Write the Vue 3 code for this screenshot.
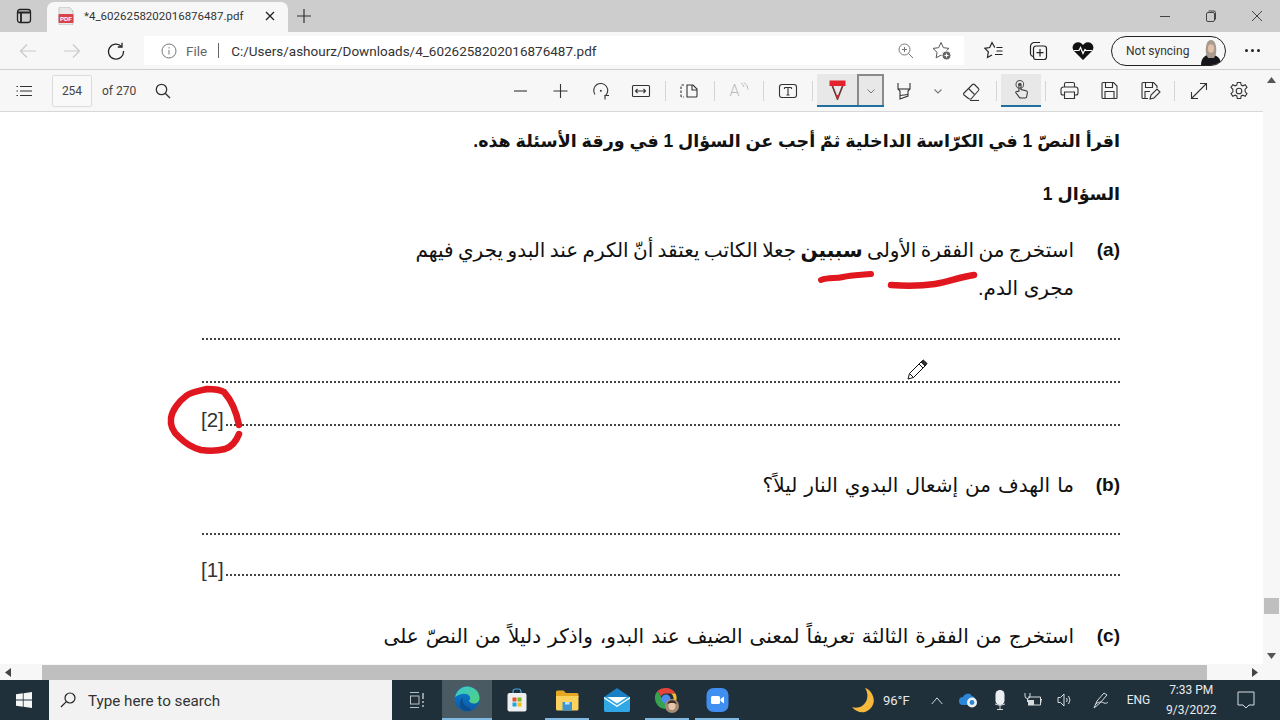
<script setup>
const leftTools = [
  { k: 'minus', d: ['M4 10h13'] },
  { k: 'plus', d: ['M10.5 3v14M3.5 10h14'] },
  { k: 'rotate', d: ['M5 13.5A7 7 0 1 1 15 15', 'M15 18.5V14.5h4', 'M10.5 9.5h.6v.6h-.6z'] },
  { k: 'fit', d: ['M3.5 4.5h15a1 1 0 0 1 1 1v9a1 1 0 0 1-1 1h-15a1 1 0 0 1-1-1v-9a1 1 0 0 1 1-1z', 'M6 10h9M7.5 8l-2 2 2 2M13.5 8l2 2-2 2'] },
]
const afterDraw = [
  { k: 'high', w: 40, d: ['M5 2v6l2 2v8l8-3v-5l2-2V2', 'M5 8h12', 'M7 14.5l8-1'] },
  { k: 'chev', w: 28, small: true, d: ['M7.500 8.500L11 12l3.500-3.500'] },
  { k: 'erase', w: 40, d: ['M3 12l8.500-8.500a1.500 1.500 0 0 1 2 0l4 4a1.500 1.500 0 0 1 0 2L10 18H8.500a1.500 1.500 0 0 1-1-.5L3 14a1.400 1.400 0 0 1 0-2z', 'M7.500 7.500l6 6', 'M9 19.500h9'] },
]
const rightTools = [
  { k: 'print', d: ['M5.500 7V4a1.500 1.500 0 0 1 1.500-1.500h7A1.500 1.500 0 0 1 15.500 4v3', 'M5.500 15H4a2 2 0 0 1-2-2V9.500a2.500 2.500 0 0 1 2.500-2.500h12A2.500 2.500 0 0 1 19 9.500V13a2 2 0 0 1-2 2h-1.500', 'M5.500 12h10v6.500h-10z'] },
  { k: 'save', d: ['M4 2.500h10.500L18 6v11.500a1 1 0 0 1-1 1H4a1 1 0 0 1-1-1v-14a1 1 0 0 1 1-1z', 'M6.500 2.500v5h7v-5', 'M6 18.500v-7h9v7'] },
  { k: 'saveas', d: ['M9 18.500H4a1 1 0 0 1-1-1v-14a1 1 0 0 1 1-1h10.500L18 6v2', 'M6.500 2.500v5h7v-5', 'M6 18v-6.500h5', 'M11 19l1-4 6-6 3 3-6 6z'] },
]
</script>

<template>
  <div class="screen">
    <div class="browser">
      <!-- tab strip -->
      <header class="tabstrip">
        <svg class="tabs-icon" width="16" height="16" viewBox="0 0 16 16" fill="none" stroke="#222" stroke-width="1.300">
          <rect x="1.500" y="1.500" width="13" height="13" rx="2.500" />
          <path d="M1.500 4.500h13M5 4.500v10" stroke-width="1.800" />
        </svg>
        <div class="tab">
          <svg width="16" height="18" viewBox="0 0 16 18">
            <path d="M1 1.500A1.500 1.500 0 0 1 2.500 0H11l4 4v12.500a1.500 1.500 0 0 1-1.500 1.500h-11A1.500 1.500 0 0 1 1 16.500z" fill="#e8e8e8" stroke="#999" stroke-width=".5" />
            <rect x="0.500" y="7" width="15" height="9" rx="1" fill="#d9444a" />
            <text x="8" y="14" text-anchor="middle" font-size="6" font-weight="700" fill="#fff" font-family="Liberation Sans">PDF</text>
          </svg>
          <span class="tab-title">*4_6026258202016876487.pdf</span>
          <svg class="tab-close" width="12" height="12" viewBox="0 0 12 12" stroke="#222" stroke-width="1.300"><path d="M2 2l8 8M10 2l-8 8" /></svg>
        </div>
        <svg class="newtab" width="16" height="16" viewBox="0 0 16 16" stroke="#333" stroke-width="1.200"><path d="M8 1v14M1 8h14" /></svg>
        <div class="winctl">
          <svg width="12" height="12" viewBox="0 0 12 12" stroke="#444"><path d="M1 6.500h10" /></svg>
          <svg width="12" height="12" viewBox="0 0 12 12" fill="none" stroke="#444"><rect x="1.500" y="2.500" width="8" height="9" rx="1.500" /><path d="M3.500 1h5.500a1.500 1.500 0 0 1 1.500 1.500v7" /></svg>
          <svg width="12" height="12" viewBox="0 0 12 12" stroke="#444"><path d="M1 1l10 10M11 1L1 11" /></svg>
        </div>
      </header>

      <!-- address row -->
      <nav class="addr-row">
        <div class="nav-btns">
          <svg width="18" height="18" viewBox="0 0 18 18" fill="none" stroke="#c9c9c9" stroke-width="1.200"><path d="M17 9H1.500M8 2.500L1.500 9 8 15.500" /></svg>
          <svg width="18" height="18" viewBox="0 0 18 18" fill="none" stroke="#c9c9c9" stroke-width="1.200"><path d="M1 9h15.500M10 2.500L16.500 9 10 15.500" /></svg>
          <svg width="18" height="18" viewBox="0 0 18 18" fill="none" stroke="#222" stroke-width="1.300"><path d="M14.500 4.500A7.500 7.500 0 1 0 16.500 9" /><path d="M15 .8v4.200h-4.200" /></svg>
        </div>
        <div class="omnibox">
          <svg width="16" height="16" viewBox="0 0 16 16" fill="none" stroke="#777"><circle cx="8" cy="8" r="7" /><path d="M8 7v4.500M8 4.200v1.300" /></svg>
          <span class="file">File</span>
          <span class="pipe"></span>
          <span class="url">C:/Users/ashourz/Downloads/4_6026258202016876487.pdf</span>
          <svg class="zoomi" width="16" height="16" viewBox="0 0 16 16" fill="none" stroke="#777"><circle cx="6.500" cy="6.500" r="5.500" /><path d="M10.500 10.500L15 15M6.500 4v5M4 6.500h5" /></svg>
          <svg class="stari" width="20" height="20" viewBox="0 0 20 20" fill="none" stroke="#555"><path d="M9 1.500l2.400 5.200 5.600.7-4.100 3.900 1 5.600-4.900-2.800-4.900 2.800 1-5.600L1 7.400l5.600-.7z" /><circle cx="14.500" cy="14.500" r="4.500" fill="#666" stroke="#fff" /><path d="M14.500 12.500v4M12.500 14.500h4" stroke="#fff" /></svg>
        </div>
        <div class="addr-tools">
          <svg width="20" height="20" viewBox="0 0 20 20" fill="none" stroke="#222" stroke-width="1.200"><path d="M10.800 6.500L8 1.500 5.700 6.500l-4.900.8 3.500 3.500-.8 5.700L8 14" /><path d="M12.500 6.500h6M12.500 10h6M11 13.500h7.500" /></svg>
          <svg width="20" height="20" viewBox="0 0 20 20" fill="none" stroke="#222" stroke-width="1.200"><path d="M5 15.500A3 3 0 0 1 2.500 13V5.500A4 4 0 0 1 6.500 1.500H12" /><rect x="5.500" y="5" width="13" height="13.500" rx="2.500" /><path d="M12 8v7.500M8.500 11.700h7" /></svg>
          <svg width="22" height="20" viewBox="0 0 22 20"><path d="M11 19L2 10A5.500 5.500 0 0 1 2 3a5.500 5.500 0 0 1 7.500-.5L11 4l1.500-1.500A5.500 5.500 0 0 1 20 3a5.500 5.500 0 0 1 0 7z" fill="#111" /><path d="M2 9.500h5l1.500-3 2.500 6 2-4 1 1h6" fill="none" stroke="#fff" stroke-width="1.200" /></svg>
          <div class="sync">
            <span>Not syncing</span>
            <svg width="22" height="26" viewBox="0 0 22 26">
              <path d="M1 26c0-6 3-9 7-10.500h5c5 1.500 8 4.500 8 10.500z" fill="#15151a" />
              <path d="M6 15C5 7 7 1 11 1s6 6 5 14l-2 4H8z" fill="#a89a8e" />
              <ellipse cx="11" cy="9.500" rx="3" ry="4.200" fill="#e3c1a8" />
            </svg>
          </div>
          <span class="more"><i></i><i></i><i></i></span>
        </div>
      </nav>

      <div class="body-row">
        <div class="main-col">
          <!-- pdf toolbar -->
          <div class="pdfbar">
            <svg class="listi" width="16" height="12" viewBox="0 0 16 12" stroke="#333" stroke-width="1.200"><path d="M4 1.500h12M4 6h12M4 10.500h12M.5 1.500h1.500M.5 6h1.500M.5 10.500h1.500" /></svg>
            <div class="pagebox">254</div>
            <span class="ofpages">of 270</span>
            <svg class="findi" width="16" height="16" viewBox="0 0 16 16" fill="none" stroke="#333" stroke-width="1.300"><circle cx="6.500" cy="6.500" r="5.200" /><path d="M10.200 10.200L15 15" /></svg>

            <div class="tools">
              <div v-for="t in leftTools" :key="t.k" class="cell">
                <svg width="22" height="20" viewBox="0 0 22 20" fill="none" stroke="#333" stroke-width="1.100"><path v-for="p in t.d" :key="p" :d="p" /></svg>
              </div>
              <span class="sep"></span>
              <div class="cell">
                <svg class="pageview" width="20" height="18" viewBox="0 0 20 18" fill="none" stroke="#333" stroke-width="1.100"><path d="M5 3H3a1 1 0 0 0-1 1v10a1 1 0 0 0 1 1h2" stroke-dasharray="2.500 1.500" /><path d="M8 3h6l4 4v7a1 1 0 0 1-1 1H8z" /><path d="M13 3v5h5" /></svg>
              </div>
              <span class="sep"></span>
              <div class="cell readaloud">
                <span>A</span>
                <svg width="9" height="10" viewBox="0 0 9 10" fill="none" stroke="#bbb"><path d="M1 1q3 2 3 4M4 .5q4 3 4 7" /></svg>
              </div>
              <span class="sep"></span>
              <div class="cell">
                <svg width="20" height="18" viewBox="0 0 20 18" fill="none" stroke="#333" stroke-width="1.100"><rect x="1.500" y="2.500" width="17" height="13" rx="2.500" /><path d="M6.500 5.500h7M10 5.500v7.500M8.500 13h3M6.500 5.500v1.500M13.500 5.500v1.500" /></svg>
              </div>
              <span class="sep"></span>
              <div class="drawgroup">
                <div class="drawbtn">
                  <svg width="17" height="20" viewBox="0 0 17 20"><path d="M3 5l5.500 14L14 5" fill="none" stroke="#6f3436" stroke-width="1.700" /><rect x="0.500" y="0.500" width="16" height="5.500" fill="#e3222b" /><path d="M6.800 15l1.700 4.500 1.700-4.500z" fill="#d9262e" /></svg>
                </div>
                <div class="drawchev">
                  <svg width="12" height="12" viewBox="0 0 12 12" fill="none" stroke="#777"><path d="M2.500 4.500L6 8l3.500-3.500" /></svg>
                </div>
              </div>
              <div v-for="t in afterDraw" :key="t.k" class="cell" :style="{ width: t.w + 'px' }">
                <svg width="22" height="20" viewBox="0 0 22 20" fill="none" :stroke="t.small ? '#777' : '#333'" stroke-width="1.100"><path v-for="p in t.d" :key="p" :d="p" /></svg>
              </div>
              <span class="sep"></span>
              <div class="touchbtn">
                <svg width="17" height="21" viewBox="0 0 20 24" fill="none" stroke="#333" stroke-width="1.200"><circle cx="8" cy="6" r="4.500" stroke="#555" /><circle cx="8" cy="6" r="2" fill="#666" stroke="none" /><path d="M7 14V6.500a1.200 1.200 0 0 1 2.400 0V12l6 1.500a2 2 0 0 1 1.500 2.200l-.7 4.300a2 2 0 0 1-2 2H9a2 2 0 0 1-1.500-.8L3.500 16a1.300 1.300 0 0 1 1.800-1.800z" /></svg>
              </div>
              <span class="sep"></span>
              <div v-for="t in rightTools" :key="t.k" class="cell">
                <svg width="22" height="21" viewBox="0 0 22 21" fill="none" stroke="#333" stroke-width="1.100"><path v-for="p in t.d" :key="p" :d="p" /></svg>
              </div>
              <span class="sep"></span>
              <div class="cell">
                <svg width="18" height="18" viewBox="0 0 18 18" fill="none" stroke="#333" stroke-width="1.100"><path d="M1.500 16.500L16.500 1.500M10 1.500h6.500V8M1.500 10v6.500H8" /></svg>
              </div>
              <div class="cell">
                <svg width="20" height="20" viewBox="0 0 20 20" fill="none" stroke="#333" stroke-width="1.100"><circle cx="10" cy="10" r="2.800" /><path d="M8.300 1.500h3.400l.5 2.500 1.700.8 2.300-1.100 1.800 2.800-1.900 1.700v2.600l1.900 1.700-1.800 2.800-2.300-1.100-1.700.8-.5 2.500H8.300l-.5-2.500-1.700-.8-2.300 1.100-1.800-2.800 1.900-1.700V8.300L2 6.500l1.800-2.800 2.300 1.100 1.700-.8z" /></svg>
              </div>
            </div>
          </div>

          <!-- page -->
          <main class="doc">
            <p class="line bold first" dir="rtl">اقرأ النصّ 1 في الكرّاسة الداخلية ثمّ أجب عن السؤال 1 في ورقة الأسئلة هذه.</p>
            <p class="line bold second" dir="rtl">السؤال 1</p>

            <section class="q qa">
              <div class="q-text" dir="rtl">
                <div class="tight">استخرج من الفقرة الأولى <b>سببين</b> جعلا الكاتب يعتقد أنّ الكرم عند البدو يجري فيهم</div>
                <div>مجرى الدم.</div>
              </div>
              <span class="q-tag">(a)</span>
            </section>
            <div class="dots d1"><i></i></div>
            <div class="dots d2"><i></i></div>
            <div class="dots d2"><span class="mark">[2]</span><i></i></div>

            <section class="q qb">
              <div class="q-text wide" dir="rtl"><div>ما الهدف من إشعال البدوي النار ليلاً؟</div></div>
              <span class="q-tag">(b)</span>
            </section>
            <div class="dots d3"><i></i></div>
            <div class="dots d4"><span class="mark">[1]</span><i></i></div>

            <section class="q qc">
              <div class="q-text wide" dir="rtl"><div>استخرج من الفقرة الثالثة تعريفاً لمعنى الضيف عند البدو، واذكر دليلاً من النصّ على</div></div>
              <span class="q-tag">(c)</span>
            </section>

            <!-- ink annotations drawn over the page -->
            <svg class="ink" width="1263" height="552" viewBox="0 112 1263 552" fill="none" stroke="#e0171f" stroke-linecap="round" stroke-linejoin="round">
              <path d="M821 280c8-3 14-1 22-3s18-2 28-3" stroke-width="6" />
              <path d="M891 285c14 1 30 1 44-1s24-7 39-9" stroke-width="6.500" />
              <path d="M239 425c-2-10-7-24-15-33-5-3-11-3-17-3-8 2-16 3-21 7-8 6-14 15-15 22-1 8 2 14 8 19 6 6 14 11 22 13 8 1 16 1 24-1 6-2 11-7 14-15" stroke-width="6.500" />
            </svg>
            <svg class="pencil" width="24" height="24" viewBox="0 0 24 24" fill="#fff" stroke="#111" stroke-width="1" stroke-linejoin="round">
              <path d="M3 21l1.500-5.500L16 4l4 4L8.500 19.500z" />
              <path d="M14 6l4 4M4.500 15.500l4 4" />
              <path d="M16 4l1.500-1.500a1 1 0 0 1 1.500 0l2.500 2.500a1 1 0 0 1 0 1.500L20 8" fill="#333" />
            </svg>
          </main>
        </div>

        <!-- vertical scrollbar -->
        <aside class="vbar">
          <svg width="9" height="6" viewBox="0 0 9 6"><path d="M4.500 0L9 6H0z" fill="#555" /></svg>
          <span class="vthumb"></span>
          <svg width="9" height="6" viewBox="0 0 9 6"><path d="M4.500 6L0 0h9z" fill="#555" /></svg>
        </aside>
      </div>

      <!-- horizontal scrollbar -->
      <div class="hbar">
        <svg width="6" height="9" viewBox="0 0 6 9"><path d="M0 4.500L6 0v9z" fill="#444" /></svg>
        <span class="hthumb"></span>
        <svg width="6" height="9" viewBox="0 0 6 9"><path d="M6 4.500L0 0v9z" fill="#444" /></svg>
      </div>
    </div>

    <!-- taskbar -->
    <footer class="taskbar">
      <div class="start">
        <svg width="16" height="16" viewBox="0 0 16 16" fill="#f4f6f7"><path d="M0 2.300l6.800-1v6.300H0zM7.600 1.200L16 0v7.600H7.600zM0 8.400h6.800v6.300L0 13.700zM7.600 8.400H16V16l-8.400-1.200z" /></svg>
      </div>
      <div class="searchbox">
        <svg width="16" height="16" viewBox="0 0 16 16" fill="none" stroke="#222" stroke-width="1.200"><circle cx="10" cy="6" r="5" /><path d="M6.300 9.700L1 15" /></svg>
        <span>Type here to search</span>
      </div>
      <div class="tb-app">
        <svg width="16" height="16" viewBox="0 0 16 16" fill="none" stroke="#b9c0c5"><path d="M1 .5h9M1 15.500h9" /><rect x="1.500" y="4" width="8.500" height="8" /><path d="M14 1v6M14 9v2M14 13v2" stroke-width="1.500" /></svg>
      </div>
      <div class="tb-app active">
        <svg width="26" height="26" viewBox="0 0 26 26">
          <defs>
            <linearGradient id="edgeA" x1="0" y1="0" x2="1" y2="1"><stop offset="0" stop-color="#37c6d0" /><stop offset="1" stop-color="#52d17c" /></linearGradient>
            <linearGradient id="edgeB" x1="0" y1="0" x2="0" y2="1"><stop offset="0" stop-color="#0c7fd4" /><stop offset="1" stop-color="#0c59a4" /></linearGradient>
          </defs>
          <circle cx="13" cy="13" r="12.500" fill="url(#edgeB)" />
          <path d="M1 11C3 4 8 .5 13 .5c7 0 12.500 5 12.500 11.500 0 3-2 5.500-5.500 5.500-3 0-5-1.500-5-3 1-1 1.500-2 1-3.500-1-3-5-4-8.500-3S3 10 1 11z" fill="url(#edgeA)" />
          <path d="M17 24c-5 2-10 .5-11-5-.5-3 1-6 3-7 -1 3 0 6 3 8 1.500 1 3.500 1.500 5 4z" fill="#0a4f8f" />
        </svg>
      </div>
      <div class="tb-app">
        <svg width="20" height="24" viewBox="0 0 20 24" fill="none">
          <path d="M6 6V3.500A2.500 2.500 0 0 1 8.500 1h3A2.500 2.500 0 0 1 14 3.500V6" stroke="#4aa3d8" stroke-width="1.200" />
          <rect x="0.500" y="5" width="19" height="18.500" rx="2" fill="#eef0f0" />
          <rect x="5.500" y="9.500" width="4" height="4" fill="#e74f25" /><rect x="10.500" y="9.500" width="4" height="4" fill="#76b82a" />
          <rect x="5.500" y="14.500" width="4" height="4" fill="#1fa5dd" /><rect x="10.500" y="14.500" width="4" height="4" fill="#fbb916" />
        </svg>
      </div>
      <div class="tb-app open">
        <svg width="24" height="22" viewBox="0 0 24 22">
          <path d="M1 3a1.500 1.500 0 0 1 1.500-1.500h6L11 4h11a1.500 1.500 0 0 1 1.500 1.500V8H1z" fill="#e5a823" />
          <path d="M1 7h22.500v13a1.500 1.500 0 0 1-1.500 1.500H2.500A1.500 1.500 0 0 1 1 20z" fill="#fad25d" />
          <rect x="7.500" y="13" width="9.500" height="8.500" fill="#3f94d3" />
          <rect x="10" y="13" width="4.500" height="2.500" fill="#bfe0f3" />
        </svg>
      </div>
      <div class="tb-app">
        <svg width="26" height="24" viewBox="0 0 26 24">
          <path d="M13 0L26 9v13a2 2 0 0 1-2 2H2a2 2 0 0 1-2-2V9z" fill="#1b7fc4" />
          <path d="M0 9h26v13a2 2 0 0 1-2 2H2a2 2 0 0 1-2-2z" fill="#30a8e6" />
          <path d="M3 9h20l-10 6.500z" fill="#fff" />
          <path d="M0 9l13 8.500L26 9v1.500L13 19 0 10.500z" fill="#fff" />
        </svg>
      </div>
      <div class="tb-app open">
        <svg width="28" height="28" viewBox="0 0 28 28">
          <path d="M13 2a11 11 0 0 1 9.500 5.500H13a5.500 5.500 0 0 0-5 3L4.500 5A11 11 0 0 1 13 2z" fill="#e5443a" />
          <path d="M22.500 7.500A11 11 0 0 1 15 23l4-7a5.500 5.500 0 0 0-1-8.500z" fill="#f5c02b" />
          <path d="M4.500 5L10 14a5.500 5.500 0 0 0 5 2.500L12 23A11 11 0 0 1 4.500 5z" fill="#35a350" />
          <circle cx="13" cy="13" r="4.500" fill="#4c8bf0" />
          <circle cx="19" cy="20" r="7" fill="#a58a74" />
          <ellipse cx="19" cy="19.500" rx="3.500" ry="4.500" fill="#e6c5aa" />
          <path d="M14.500 18c0-5 9-5 9 0-2-1.500-7-1.500-9 0z" fill="#3c2f28" />
        </svg>
      </div>
      <div class="tb-app open">
        <svg width="23" height="26" viewBox="0 0 23 26">
          <rect x="0.500" y="1" width="22" height="24" rx="7" fill="#3f8ef0" />
          <rect x="5" y="9" width="9" height="8" rx="1.500" fill="#fff" />
          <path d="M14.500 12l3.500-2.500v7L14.500 14z" fill="#fff" />
        </svg>
      </div>

      <div class="tray">
        <svg class="moon" width="24" height="27" viewBox="0 0 24 27"><path d="M14 1c4 6 3 14-3 18-3 2-7 2-10 1 3 4 8 6 13 5 6-2 10-8 8.500-14C21.500 6 18 2 14 1z" fill="#f6b93b" /></svg>
        <span class="temp">96°F</span>
        <svg class="chev" width="14" height="9" viewBox="0 0 16 10" fill="none" stroke="#d8dcdf" stroke-width="1.100"><path d="M2 9l6-7 6 7" /></svg>
        <svg class="cloud" width="20" height="16" viewBox="0 0 20 16"><path d="M4 13a4 4 0 0 1 0-8 5 5 0 0 1 9-1 4 4 0 0 1 3 6v3z" fill="#2c86d8" /><circle cx="13" cy="10.500" r="5" fill="#eef2f5" /><circle cx="13" cy="10.500" r="2.400" fill="#2c86d8" /></svg>
        <svg class="mic" width="12" height="20" viewBox="0 0 12 20"><rect x="1.500" y="0" width="9" height="15" rx="4.500" fill="#eceff1" /><path d="M1 14q5 3 10 0M6 16v3M3 19.500h6" stroke="#cfd4d8" fill="none" /></svg>
        <svg class="power" width="18" height="16" viewBox="0 0 18 16" fill="none" stroke="#d8dcdf"><path d="M4 5h12.500v8H4M16.500 7.500h1.500v3" /><path d="M1 1v3a2.500 2.500 0 0 0 5 0V1M3.500 6.500V10" /><rect x="4" y="8" width="6" height="5" fill="#d8dcdf" stroke="none" /></svg>
        <svg class="vol" width="16" height="16" viewBox="0 0 16 16" fill="none" stroke="#d8dcdf"><path d="M1 5.500h2.500L7 2v12l-3.500-3.500H1z" /><path d="M9.500 6q1.500 2 0 4M11.500 4q3 4 0 8" /></svg>
        <svg class="penic" width="16" height="18" viewBox="0 0 16 18" fill="none" stroke="#d8dcdf"><path d="M1 17l3-7 7-8 3 2-7 8z" /><path d="M3 13c3-3 6-2 8-1 2 .8 3 0 4-1" /></svg>
        <span class="eng">ENG</span>
        <div class="clock"><span>7:33 PM</span><span>9/3/2022</span></div>
        <svg class="notif" width="18" height="18" viewBox="0 0 18 18" fill="none" stroke="#d8dcdf"><path d="M1 1h16v13h-5l-3 3-3-3H1z" /></svg>
      </div>
    </footer>
  </div>
</template>

<style>
html, body { margin: 0; padding: 0; background: #fff; }
</style>

<style scoped>
.screen {
  width: 1280px;
  height: 720px;
  display: flex;
  flex-direction: column;
  overflow: hidden;
  font-family: Roboto, "Liberation Sans", sans-serif;
  color: #222;
}
.browser { height: 680px; display: flex; flex-direction: column; }

.tabstrip {
  height: 32px;
  flex: none;
  background: #cdcdcd;
  display: flex;
  align-items: center;
  padding-left: 16px;
}
.tabs-icon { margin-right: 15px; }
.tab {
  width: 241px;
  height: 30px;
  margin-top: 2px;
  box-sizing: border-box;
  background: #f7f7f7;
  border-radius: 7px 7px 0 0;
  display: flex;
  align-items: center;
  padding: 0 12px 2px 11px;
}
.tab-title { margin-left: 10px; font-size: 11.500px; color: #333; white-space: nowrap; }
.tab-close { margin-left: auto; }
.newtab { margin-left: 8px; }
.winctl {
  margin-left: auto;
  width: 138px;
  display: flex;
  justify-content: space-around;
}

.addr-row {
  height: 38px;
  flex: none;
  box-sizing: border-box;
  background: #f7f7f7;
  border-bottom: 1px solid #cfcfcf;
  display: flex;
  align-items: center;
}
.nav-btns { width: 144px; padding-left: 19px; box-sizing: border-box; display: flex; gap: 26px; }
.omnibox {
  width: 820px;
  height: 29px;
  background: #fff;
  box-sizing: border-box;
  padding-left: 17px;
  display: flex;
  align-items: center;
}
.file { margin-left: 9px; font-size: 13.500px; color: #666; }
.pipe { width: 1px; height: 15px; background: #666; margin: 0 12px 0 11px; }
.url { font-size: 13.500px; color: #333; white-space: nowrap; }
.zoomi { margin-left: auto; margin-right: 18px; }
.stari { margin-right: 12px; }
.addr-tools { flex: 1; display: flex; align-items: center; padding-left: 20px; }
.addr-tools > svg { margin-right: 24px; }
.addr-tools > svg:nth-child(3) { margin-right: 17px; }
.sync {
  width: 115px;
  height: 30px;
  box-sizing: border-box;
  border: 1.500px solid #222;
  border-radius: 15px;
  display: flex;
  align-items: center;
  justify-content: space-between;
  padding: 0 3px 0 14px;
  font-size: 12px;
  color: #333;
  overflow: hidden;
}
.sync svg { margin-top: 3px; }
.more { margin-left: 19px; display: flex; gap: 3px; }
.more i { width: 3px; height: 3px; border-radius: 50%; background: #222; }

.body-row { flex: 1; min-height: 0; display: flex; }
.main-col { flex: 1; min-width: 0; display: flex; flex-direction: column; }
.vbar {
  width: 17px;
  flex: none;
  background: #f7f7f7;
  position: relative;
  display: flex;
  flex-direction: column;
  align-items: center;
  justify-content: space-between;
  padding: 7px 0 5px;
  box-sizing: border-box;
}
.vthumb {
  position: absolute;
  left: 1px;
  top: 528px;
  width: 15px;
  height: 16px;
  background: #bfbfbf;
}

.pdfbar {
  height: 42px;
  flex: none;
  box-sizing: border-box;
  background: #f7f7f7;
  border-bottom: 1px solid #d8d8d8;
  display: flex;
  align-items: center;
  padding-left: 16px;
}
.listi { margin-right: 20px; }
.pagebox {
  width: 40px;
  height: 32px;
  box-sizing: border-box;
  border: 1px solid #dcdcdc;
  border-radius: 2px;
  background: #f9f9f9;
  font-size: 12px;
  color: #444;
  display: flex;
  align-items: center;
  justify-content: center;
}
.ofpages { margin-left: 10px; font-size: 12px; color: #444; }
.findi { margin-left: 19px; }

.tools { margin-left: auto; display: flex; align-items: center; height: 100%; padding-right: 4px; }
.cell { width: 40px; height: 32px; display: flex; align-items: center; justify-content: center; flex: none; }
.pageview { margin-left: -2px; }
.sep { width: 1px; height: 20px; background: #d4d4d4; margin: 0 4px; flex: none; }
.readaloud { color: #bbb; font-size: 16px; font-weight: 300; }
.readaloud svg { margin-bottom: 8px; }
.drawgroup { display: flex; height: 31px; border-bottom: 2px solid #1f6f9f; }
.drawbtn { width: 40px; background: #e8e8e8; display: flex; align-items: center; justify-content: center; }
.drawchev {
  width: 27px;
  box-sizing: border-box;
  background: #e8e8e8;
  border: 2px solid #8a8a8a;
  border-bottom: 0;
  display: flex;
  align-items: center;
  justify-content: center;
}
.touchbtn {
  width: 40px;
  height: 31px;
  background: #e8e8e8;
  border-bottom: 2px solid #1f6f9f;
  display: flex;
  align-items: center;
  justify-content: center;
  flex: none;
}

.doc {
  flex: 1;
  min-height: 0;
  background: #fff;
  position: relative;
  overflow: hidden;
  box-sizing: border-box;
  padding: 9px 143px 0 202px;
  font-family: "Liberation Sans", "DejaVu Sans", sans-serif;
  font-size: 20px;
  color: #111;
}
.line { margin: 0; white-space: nowrap; line-height: 40px; font-size: 17.500px; }
.bold { font-weight: 700; }
.second { margin-top: 13px; }
.q { display: flex; justify-content: flex-end; white-space: nowrap; line-height: 38px; }
.qa { margin-top: 17px; }
.qb { margin-top: 40px; }
.qc { margin-top: 41px; }
.tight { word-spacing: -1.200px; }
.wide { word-spacing: 1.500px; }
.q-tag { width: 46px; text-align: right; font-weight: 700; font-size: 19px; flex: none; }
.dots { display: flex; align-items: flex-end; }
.dots i { flex: 1; border-bottom: 2px dotted #444; }
.d1 { height: 33px; }
.d2 { height: 43px; }
.d3 { height: 31px; }
.d4 { height: 41px; }
.mark { font-size: 20.500px; line-height: 22px; color: #333; margin-bottom: -5px; margin-left: -1px; padding-right: 2px; }
.ink { position: absolute; left: 0; top: 0; pointer-events: none; }
.pencil { position: absolute; left: 905px; top: 246px; }

.hbar {
  height: 16px;
  flex: none;
  background: #f7f7f7;
  display: flex;
  align-items: center;
  padding: 0 22px 0 5px;
  position: relative;
  justify-content: space-between;
  box-sizing: border-box;
}
.hthumb {
  position: absolute;
  left: 42px;
  width: 1165px;
  top: 1px;
  bottom: 0;
  background: #bfbfbf;
}

.taskbar {
  height: 40px;
  flex: none;
  background: #20303b;
  display: flex;
  align-items: center;
  position: relative;
}
.start { width: 49px; display: flex; justify-content: center; padding-right: 1px; box-sizing: border-box; }
.searchbox {
  width: 343px;
  height: 40px;
  flex: none;
  box-sizing: border-box;
  background: #f2f2f2;
  display: flex;
  align-items: center;
  padding-left: 11px;
  gap: 12px;
  font-size: 15.200px;
  color: #333;
}
.searchbox span { padding-top: 2px; }
.tb-app {
  width: 50px;
  height: 40px;
  flex: none;
  display: flex;
  align-items: center;
  justify-content: center;
  box-sizing: border-box;
  position: relative;
}
.active { background: #4a5a63; border-bottom: 2px solid #7fb8e0; }
.open::after {
  content: "";
  position: absolute;
  left: 3px;
  right: 3px;
  bottom: 0;
  height: 2px;
  background: #7fb8e0;
}
.tray { flex: 1; display: flex; align-items: center; height: 40px; color: #e8ebed; }
.moon { margin-left: 109px; }
.temp { margin-left: 8px; font-size: 13px; }
.chev { margin-left: 20px; }
.cloud { margin-left: 15px; }
.mic { margin-left: 15px; }
.power { margin-left: 18px; }
.vol { margin-left: 15px; }
.penic { margin-left: 20px; }
.eng { margin-left: 18px; font-size: 12px; }
.clock {
  margin-left: 15px;
  width: 52px;
  display: flex;
  flex-direction: column;
  align-items: center;
  font-size: 12px;
  line-height: 20px;
}
.notif { margin-left: 20px; }
</style>
